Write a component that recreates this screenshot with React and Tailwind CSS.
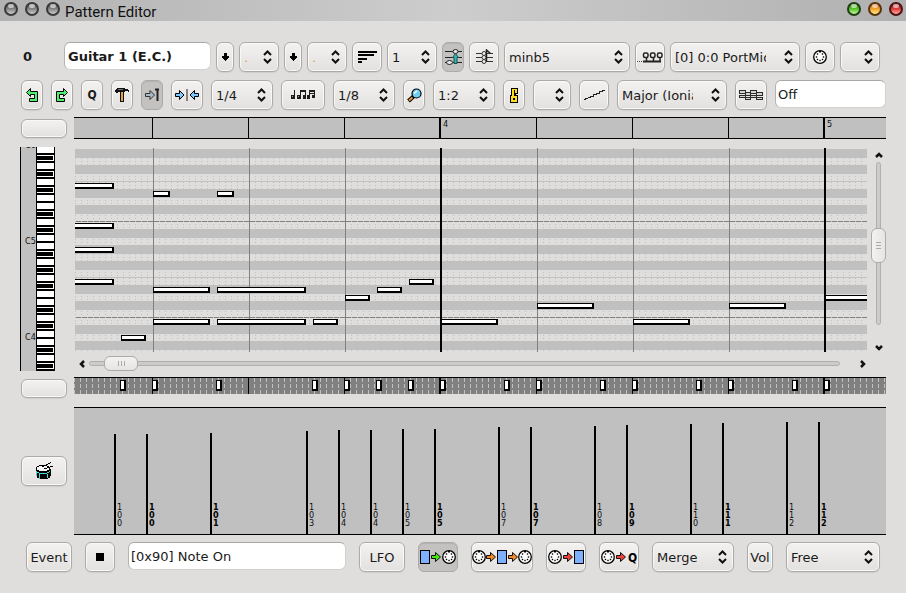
import React from "react";

/* ---------- data ---------- */

// Notes of the pattern: start and length in pixels, row counted from the top.
const NOTES = [
  { x: 0, w: 39, row: 4, open: true },
  { x: 0, w: 39, row: 9, open: true },
  { x: 0, w: 39, row: 12, open: true },
  { x: 0, w: 39, row: 16, open: true },
  { x: 78, w: 17, row: 5 },
  { x: 142, w: 17, row: 5 },
  { x: 78, w: 57, row: 17 },
  { x: 142, w: 89, row: 17 },
  { x: 78, w: 57, row: 21 },
  { x: 142, w: 89, row: 21 },
  { x: 238, w: 25, row: 21 },
  { x: 46, w: 25, row: 23 },
  { x: 270, w: 25, row: 18 },
  { x: 302, w: 25, row: 17 },
  { x: 334, w: 25, row: 16 },
  { x: 366, w: 57, row: 21 },
  { x: 462, w: 57, row: 19 },
  { x: 558, w: 57, row: 21 },
  { x: 654, w: 57, row: 19 },
  { x: 750, w: 57, row: 18 },
];

const SHADED_ROWS = [0, 2, 5, 7, 10, 12, 14, 17, 19, 22, 24];
const BLACK_KEYS = [9, 25, 41, 65, 81, 105, 121, 137, 161, 177, 201, 217];
const KEY_EDGES = Array.from({ length: 28 }, (_, i) => 6 + i * 8);

const BEATS = [78, 174, 270, 462, 558, 654];
const BARS = [
  { x: 366, name: "4" },
  { x: 750, name: "5" },
];

const EVENTS = [
  { x: 40, v: 100, bold: false },
  { x: 72, v: 100, bold: true },
  { x: 136, v: 101, bold: true },
  { x: 232, v: 103, bold: false },
  { x: 264, v: 104, bold: false },
  { x: 296, v: 104, bold: false },
  { x: 328, v: 105, bold: false },
  { x: 360, v: 105, bold: true },
  { x: 424, v: 107, bold: false },
  { x: 456, v: 107, bold: true },
  { x: 520, v: 108, bold: false },
  { x: 552, v: 109, bold: true },
  { x: 616, v: 110, bold: false },
  { x: 648, v: 111, bold: true },
  { x: 712, v: 112, bold: false },
  { x: 744, v: 112, bold: true },
];

/* ---------- controls ---------- */

const FACE =
  "flex h-[30px] shrink-0 items-center justify-center overflow-hidden rounded-md border border-[#adaba8] text-[13px] text-[#1a1a1a]";
const RAISED =
  "bg-gradient-to-b from-[#f3f2f1] to-[#e2e1df] shadow-[inset_0_0_0_1px_#f8f8f7,0_1px_1px_#cfcecc]";
const PRESSED = "bg-[#c3c2c1] shadow-[inset_0_1px_1px_#b4b3b1]";

function Button({ label, width, active, children }) {
  const isText = typeof children === "string";
  return (
    <button
      type="button"
      aria-label={label}
      aria-pressed={active}
      className={`${FACE} ${active ? PRESSED : RAISED} ${width} ${isText ? "pt-[2px]" : ""}`}
    >
      {children}
    </button>
  );
}

function Combo({ label, width, value, tone = "text-[#1a1a1a]", pad = "pr-[33px]" }) {
  return (
    <div className={`relative shrink-0 ${width}`}>
      <select
        aria-label={label}
        defaultValue={value}
        className={`block h-[30px] w-full appearance-none overflow-hidden rounded-md border border-[#adaba8] pt-[2px] pl-1 text-[13px] ${RAISED} ${pad} ${tone}`}
      >
        <option value={value}>{value}</option>
      </select>
      <svg
        className="pointer-events-none absolute top-2 right-[7px]"
        width="9"
        height="14"
        fill="none"
        stroke="#111"
        strokeWidth="2"
      >
        <path d="M1 5 L4.500 1.500 L8 5 M1 9 L4.500 12.500 L8 9" />
      </svg>
    </div>
  );
}

const FIELD =
  "h-7 min-w-0 flex-1 rounded-md border border-[#d2d1cf] border-t-[#a9a8a6] border-l-[#b5b4b2] bg-white text-[13px] text-[#1a1a1a]";

function TextBox({ label, value }) {
  return <input type="text" aria-label={label} defaultValue={value} className={`${FIELD} px-[2px]`} />;
}

function SideButton({ label, height, children }) {
  return (
    <button
      type="button"
      aria-label={label}
      className={`ml-px flex w-[46px] items-center justify-center rounded-md border border-[#adaba8] ${RAISED} ${height}`}
    >
      {children}
    </button>
  );
}

/* ---------- icons ---------- */

function Icon({ w, h, smooth, children }) {
  return (
    <svg
      width={w}
      height={h}
      viewBox={`0 0 ${w} ${h}`}
      shapeRendering={smooth ? "auto" : "crispEdges"}
      className="shrink-0"
      aria-hidden="true"
    >
      {children}
    </svg>
  );
}

const DownArrow = () => (
  <Icon w={7} h={8}>
    <path d="M2 0h3v3h2v2h-1v1h-1v1h-1v1h-1v-1h-1v-1h-1v-1h-1v-2h2z" fill="#000" />
  </Icon>
);

const UndoIcon = () => (
  <Icon w={12} h={14} smooth>
    <path d="M.5 4.500L4.500.5V3.500H11.500V13.500H3.500V10.500H8.500V6.500H4.500V8.500Z" fill="#4df06c" stroke="#000" />
  </Icon>
);

const RedoIcon = () => (
  <Icon w={12} h={14} smooth>
    <path d="M11.500 4.500L7.500.5V3.500H.5V13.500H8.500V10.500H3.500V6.500H7.500V8.500Z" fill="#4df06c" stroke="#000" />
  </Icon>
);

const HammerIcon = () => (
  <Icon w={14} h={14}>
    <path d="M2 0h8v1h3v1h1v2h-1v-1h-3v1h-7v1h-2v-1h-1v-2h1v-1h1z" fill="#111" />
    <path d="M3 1h5v1h-5z" fill="#777" />
    <path d="M5 4h4v10h-4z" fill="#111" />
    <path d="M6 4h2v9h-2z" fill="#e3a33c" />
  </Icon>
);

const StepIcon = () => (
  <Icon w={15} h={14} smooth>
    <path d="M.5 5.500H5V2.500L9.500 7L5 11.500V8.500H.5Z" fill="#a9bac6" stroke="#333" />
    <path d="M10 1.500H14M12.500 1V13" stroke="#222" strokeWidth="2" fill="none" />
  </Icon>
);

const SnapInIcon = () => (
  <Icon w={24} h={12} smooth>
    <path d="M.5 4.500H4.500V1.500L9 6L4.500 10.500V7.500H.5Z" fill="#7cc8ff" stroke="#000" />
    <path d="M23.500 4.500H19.500V1.500L15 6L19.500 10.500V7.500H23.500Z" fill="#7cc8ff" stroke="#000" />
    <path d="M11.500 0h1v12h-1z" fill="#222" />
  </Icon>
);

const NotesIcon = () => (
  <Icon w={25} h={10}>
    <path
      d="M3 0h1v9h-1zM0 5h4v4h-4zM9 0h1v9h-1zM6 5h4v4h-4zM9 0h6v2h-6zM14 0h1v9h-1zM12 5h3v4h-3zM18 0h1v9h-1zM16 5h3v4h-3zM18 0h6v2h-6zM18 3h6v1h-6zM23 0h1v8h-1zM21 5h3v3h-3z"
      fill="#1c1c1c"
    />
    <path d="M1 6h1v1h-1zM7 6h1v1h-1z" fill="#999" />
  </Icon>
);

const ZoomIcon = () => (
  <Icon w={15} h={15} smooth>
    <path d="M6.500 8.500L1.500 13" stroke="#000" strokeWidth="4" />
    <path d="M5.500 9.500L2 12.500" stroke="#e8973a" strokeWidth="2" />
    <circle cx="9.500" cy="5.500" r="4.500" fill="#6fcdf5" stroke="#000" strokeWidth="1.200" />
    <path d="M7 5.500L10 3" stroke="#fff" strokeWidth="1.500" />
  </Icon>
);

const KeyIcon = () => (
  <Icon w={8} h={15}>
    <path d="M1 0h7v6h-2v1h2v8h-8v-8h1z" fill="#000" />
    <path d="M2 1h2v7h-2zM4 1h3v1h-3zM5 2h2v3h-2zM1 8h6v6h-6z" fill="#fbdc1e" />
    <path d="M3 10h2v2h-2z" fill="#000" />
  </Icon>
);

const StairIcon = () => (
  <Icon w={22} h={12}>
    <path d="M0 10h2v-1h3v-1h2v-1h3v-2h3v-1h3v-2h3v-1h3v1h-2v1h-3v2h-3v1h-3v2h-3v1h-3v1h-2v1h-2z" fill="#222" />
  </Icon>
);

const WeaveIcon = () => (
  <Icon w={24} h={12}>
    <g fill="#d4d4d4" stroke="#2c2c2c">
      <rect x=".5" y="1.500" width="6" height="3" />
      <rect x=".5" y="6.500" width="6" height="2" />
      <rect x="6.500" y="3.500" width="5" height="3" />
      <rect x="6.500" y="8.500" width="5" height="2" />
      <rect x="11.500" y="1.500" width="6" height="3" />
      <rect x="11.500" y="6.500" width="6" height="2" />
      <rect x="17.500" y="3.500" width="6" height="3" />
      <rect x="17.500" y="8.500" width="6" height="2" />
    </g>
  </Icon>
);

const LinesIcon = () => (
  <Icon w={19} h={12}>
    <path d="M0 0h19v2h-19zM0 3h16v2h-16zM0 7h9v2h-9zM0 10h4v2h-4z" fill="#000" />
  </Icon>
);

const TransposeIcon = () => (
  <Icon w={17} h={16} smooth>
    <path d="M0 2.500H17M0 8.500H17M0 13.500H17" stroke="#222" />
    <ellipse cx="10.500" cy="2.500" rx="2.500" ry="2" fill="#e6e6e6" stroke="#222" />
    <ellipse cx="4.500" cy="13.500" rx="3" ry="2" fill="#e6e6e6" stroke="#222" />
    <path d="M10.500 4.500L13.500 8.500H12V14.500H9V8.500H7.500Z" fill="#2fb5b0" stroke="#1d4f4d" />
  </Icon>
);

const ChordIcon = () => (
  <Icon w={17} h={16} smooth>
    <path d="M0 4.500H17M0 8.500H17M0 12.500H17" stroke="#333" />
    <g fill="#eee" stroke="#333">
      <circle cx="8" cy="4.500" r="2" />
      <circle cx="8" cy="8.500" r="2" />
      <circle cx="8" cy="12.500" r="2" />
    </g>
    <path d="M10.500 13V1L14.500 4.500" fill="none" stroke="#222" strokeWidth="1.500" />
  </Icon>
);

const ToneIcon = () => (
  <Icon w={26} h={11} smooth>
    <g fill="#eee" stroke="#222" strokeWidth="1.500">
      <rect x="6.500" y="1" width="4.500" height="4.500" rx="1.500" />
      <rect x="13.500" y="1" width="4.500" height="4.500" rx="1.500" />
      <rect x="20.500" y="1" width="4.500" height="4.500" rx="1.500" />
    </g>
    <path d="M9.500 5V9M16.500 5V9M23 5V9" stroke="#222" strokeWidth="1.500" />
    <path d="M6 9.500H24" stroke="#222" strokeWidth="2" />
    <path d="M0 9.500H6" stroke="#444" strokeDasharray="1 1" />
  </Icon>
);

const PINS = [
  [3.5, 7],
  [4.5, 4],
  [9.5, 4],
  [10.5, 7],
  [4.5, 9.5],
  [7, 10.5],
  [9.5, 9.5],
];

function Din({ x }) {
  return (
    <g transform={`translate(${x - 7} 0)`}>
      <circle cx="7" cy="7" r="6.300" fill="#fff" stroke="#000" strokeWidth="1.300" />
      <path d="M6 1h2v1.500h-2z" fill="#000" />
      {PINS.map(([px, py]) => (
        <rect key={`${px}-${py}`} x={px - 0.7} y={py - 0.7} width="1.400" height="1.400" fill="#000" />
      ))}
    </g>
  );
}

function Arrow({ x, fill }) {
  return <path transform={`translate(${x} 0)`} d="M.5 5.500H4.500V2.500L9.500 7L4.500 11.500V8.500H.5Z" fill={fill} stroke="#111" />;
}

function Block({ x }) {
  return <rect x={x + 0.5} y=".5" width="9" height="13" fill="#7fb0ff" stroke="#000" />;
}

const DinIcon = () => (
  <Icon w={14} h={14} smooth>
    <Din x={7} />
  </Icon>
);

const BlockToDin = () => (
  <Icon w={36} h={14} smooth>
    <Block x={0} />
    <Arrow x={11} fill="#46e613" />
    <Din x={29} />
  </Icon>
);

const DinThruDin = () => (
  <Icon w={60} h={14} smooth>
    <Din x={7} />
    <Arrow x={14} fill="#f08a24" />
    <Block x={25} />
    <Arrow x={36} fill="#f08a24" />
    <Din x={53} />
  </Icon>
);

const DinToBlock = () => (
  <Icon w={36} h={14} smooth>
    <Din x={7} />
    <Arrow x={15} fill="#f0403a" />
    <Block x={26} />
  </Icon>
);

const DinToQ = () => (
  <Icon w={36} h={14} smooth>
    <Din x={7} />
    <Arrow x={15} fill="#f0403a" />
    <text x="27" y="12" fontSize="12" fontWeight="bold" className="font-['DejaVu_Sans_Condensed']">
      Q
    </text>
  </Icon>
);

const DrumIcon = () => (
  <Icon w={18} h={18}>
    <path d="M1 7h15v7h-1v2h-2v1h-9v-1h-2v-2h-1z" fill="#000" />
    <path d="M4 3h8v1h2v1h1v3h-1v1h-2v1h-8v-1h-2v-1h-1v-3h1v-1h2z" fill="#000" />
    <path d="M4 4h8v1h2v3h-2v1h-8v-1h-2v-3h2z" fill="#f4f4f4" />
    <path d="M1 9h1v1h2v1h8v-1h2v-1h1v1h-1v1h-2v1h-8v-1h-2v-1h-1zM4 12h1v5h-1zM12 12h1v4h-1zM1 10h1v4h-1z" fill="#45d9dc" />
    <path d="M15 0h1v1h-1v1h-2v1h-2v1h-2v1h-2v-1h2v-1h2v-1h2v-1h2zM18 4h-3v1h-3v1h-3v1h3v-1h3v-1h3z" fill="#000" />
  </Icon>
);

/* ---------- title bar ---------- */

const LIGHTS = {
  grey: "from-[#4a4a4a] via-[#868686] to-[#d0d0d0] border-[#3a3a3a]",
  green: "from-[#2e7d12] via-[#58c62b] to-[#c2f79a] border-[#1f3f12]",
  amber: "from-[#b8560f] via-[#f0a22c] to-[#fff08a] border-[#5a3210]",
  red: "from-[#8e1414] via-[#dd3b3b] to-[#ffaaa2] border-[#4d1212]",
};

function Light({ label, tone }) {
  return (
    <button
      type="button"
      aria-label={label}
      className={`flex size-[14px] justify-center rounded-full border-2 bg-gradient-to-b ${LIGHTS[tone]}`}
    >
      <span className="h-1 w-[6px] rounded-full bg-white/60" />
    </button>
  );
}

function TitleBar() {
  return (
    <header className="flex h-[21px] items-start justify-between bg-gradient-to-r from-[#b2b2b2] via-[#cdcdcd] to-[#b0b0b0] px-1 pt-[2px]">
      <div className="flex gap-[7px]">
        <Light label="Menu" tone="grey" />
        <Light label="Shade" tone="grey" />
        <Light label="Stick" tone="grey" />
        <h1 className="-ml-[2px] font-[Roboto,sans-serif] text-[15px] leading-5 text-[#111]">Pattern Editor</h1>
      </div>
      <div className="-mr-px flex gap-[7px]">
        <Light label="Minimise" tone="green" />
        <Light label="Maximise" tone="amber" />
        <Light label="Close" tone="red" />
      </div>
    </header>
  );
}

/* ---------- editor panes ---------- */

function Timeline() {
  return (
    <svg className="h-[22px] min-w-0 flex-1" shapeRendering="crispEdges">
      <rect width="100%" height="22" fill="#c0c0c0" />
      <rect width="100%" height="1" fill="#000" />
      <rect y="21" width="100%" height="1" fill="#000" />
      {BEATS.map((x) => (
        <rect key={x} x={x} width="1" height="22" fill="#000" />
      ))}
      {BARS.map((bar) => (
        <g key={bar.name}>
          <rect x={bar.x - 1} width="2" height="22" fill="#000" />
          <text x={bar.x + 3} y="10" fontSize="9" fill="#111" className="font-['DejaVu_Sans_Condensed']">
            {bar.name}
          </text>
        </g>
      ))}
    </svg>
  );
}

function Keyboard() {
  return (
    <svg width="35" height="224" className="shrink-0" shapeRendering="crispEdges">
      <rect width="35" height="224" fill="#000" />
      <rect x="1" width="15" height="224" fill="#c0c0c0" />
      <rect x="17" width="17" height="224" fill="#fff" />
      {KEY_EDGES.map((y) => (
        <rect key={y} x="17" y={y} width="17" height="2" fill="#000" />
      ))}
      {BLACK_KEYS.map((y) => (
        <rect key={y} x="17" y={y} width="16" height="4" fill="#000" />
      ))}
      <g fontSize="9" fill="#111" className="font-['DejaVu_Sans_Condensed']">
        <text x="5" y="1">C6</text>
        <text x="5" y="97">C5</text>
        <text x="5" y="193">C4</text>
      </g>
    </svg>
  );
}

function Roll() {
  return (
    <svg className="block h-[204px] w-full" shapeRendering="crispEdges">
      <defs>
        <pattern id="dots" width="6" height="3" patternUnits="userSpaceOnUse" y="1">
          <rect width="1" height="1" fill="#c0c0c0" />
        </pattern>
      </defs>
      <rect y="10" width="100%" height="194" fill="url(#dots)" />
      {SHADED_ROWS.map((row) => (
        <rect key={row} y={row * 8 + 1} width="100%" height="9" fill="#c0c0c0" />
      ))}
      {[33, 129].map((y) => (
        <rect key={y} y={y} width="100%" height="1" fill="#c0c0c0" />
      ))}
      {[73, 169].map((y) => (
        <line key={y} x1="1" x2="100%" y1={y + 0.5} y2={y + 0.5} stroke="#808080" strokeDasharray="5 1" />
      ))}
      {BEATS.map((x) => (
        <rect key={x} x={x} width="1" height="204" fill="#808080" />
      ))}
      {BARS.map((bar) => (
        <rect key={bar.name} x={bar.x - 1} width="2" height="204" fill="#000" />
      ))}
      {NOTES.map((n) => (
        <g key={`${n.x}-${n.row}`}>
          <rect x={n.x} y={n.row * 8 + 3} width={n.w} height="6" fill="#000" />
          <rect
            x={n.open ? n.x : n.x + 1}
            y={n.row * 8 + 4}
            width={n.open ? n.w - 2 : n.w - 3}
            height="3"
            fill="#fff"
          />
        </g>
      ))}
    </svg>
  );
}

function EventStrip() {
  return (
    <svg className="h-[17px] min-w-0 flex-1" shapeRendering="crispEdges">
      <defs>
        <pattern id="ticks" width="6" height="6" y="1" patternUnits="userSpaceOnUse">
          <rect width="1" height="4" fill="#c0c0c0" />
        </pattern>
      </defs>
      <rect width="100%" height="17" fill="#808080" />
      <rect width="100%" height="17" fill="url(#ticks)" />
      <rect width="100%" height="1" fill="#000" />
      {BEATS.map((x) => (
        <rect key={x} x={x} width="1" height="17" fill="#000" />
      ))}
      {BARS.map((bar) => (
        <rect key={bar.name} x={bar.x - 1} width="2" height="17" fill="#000" />
      ))}
      {EVENTS.map((e) => (
        <g key={e.x}>
          <rect x={e.x + 6} y="3" width="6" height="11" fill="#000" />
          <rect x={e.x + 7} y="4" width="3" height="8" fill="#fff" />
        </g>
      ))}
    </svg>
  );
}

function VelocityPane() {
  return (
    <svg className="h-32 min-w-0 flex-1" shapeRendering="crispEdges">
      <rect width="100%" height="128" fill="#c0c0c0" />
      <rect width="100%" height="1" fill="#000" />
      <rect y="127" width="100%" height="1" fill="#000" />
      {EVENTS.map((e) => (
        <g key={e.x}>
          <rect x={e.x} y={127 - e.v} width="2" height={e.v} fill="#000" />
          <text
            fontSize="9"
            fontWeight={e.bold ? "bold" : "normal"}
            fill={e.bold ? "#000" : "#111"}
            className="font-['DejaVu_Sans_Condensed']"
          >
            {String(e.v).split("").map((digit, i) => (
              <tspan key={i} x={e.x + 3} y={103 + i * 8}>
                {digit}
              </tspan>
            ))}
          </text>
        </g>
      ))}
    </svg>
  );
}

/* ---------- scroll bars ---------- */

const TRACK = "relative rounded-full border border-[#b0afad] bg-[#cccbca]";

function HorizontalScroll() {
  return (
    <div className="flex h-[15px] items-center">
      <button type="button" aria-label="Scroll left" className="flex w-[14px] justify-center">
        <svg width="6" height="8" fill="none" stroke="#111" strokeWidth="2.500">
          <path d="M5 1L2 4L5 7" />
        </svg>
      </button>
      <div role="scrollbar" aria-orientation="horizontal" aria-controls="roll" aria-valuenow={2} className={`h-[5px] flex-1 ${TRACK}`}>
        <div className="absolute -top-[6px] left-[14px] flex h-[15px] w-[34px] items-center justify-center gap-[2px] rounded-md border border-[#adaba8] bg-gradient-to-b from-[#f3f2f1] to-[#e6e5e3]">
          <span className="h-[5px] w-px bg-[#aaa]" />
          <span className="h-[5px] w-px bg-[#aaa]" />
          <span className="h-[5px] w-px bg-[#aaa]" />
        </div>
      </div>
      <button type="button" aria-label="Scroll right" className="ml-[18px] flex w-[9px] justify-center">
        <svg width="6" height="8" fill="none" stroke="#111" strokeWidth="2.500">
          <path d="M1 1L4 4L1 7" />
        </svg>
      </button>
    </div>
  );
}

function VerticalScroll() {
  return (
    <div className="flex h-[204px] w-[15px] shrink-0 flex-col items-center">
      <button type="button" aria-label="Scroll up" className="flex h-[14px] items-center">
        <svg width="8" height="6" fill="none" stroke="#111" strokeWidth="2.500">
          <path d="M1 5L4 2L7 5" />
        </svg>
      </button>
      <div role="scrollbar" aria-orientation="vertical" aria-controls="roll" aria-valuenow={50} className={`w-[5px] flex-1 ${TRACK}`}>
        <div className="absolute top-[65px] -left-[6px] flex h-[35px] w-[15px] flex-col items-center justify-center gap-[2px] rounded-md border border-[#adaba8] bg-gradient-to-r from-[#f3f2f1] to-[#e6e5e3]">
          <span className="h-px w-[5px] bg-[#aaa]" />
          <span className="h-px w-[5px] bg-[#aaa]" />
          <span className="h-px w-[5px] bg-[#aaa]" />
        </div>
      </div>
      <button type="button" aria-label="Scroll down" className="mt-[18px] flex h-[9px] items-center">
        <svg width="8" height="6" fill="none" stroke="#111" strokeWidth="2.500">
          <path d="M1 1L4 4L7 1" />
        </svg>
      </button>
    </div>
  );
}

/* ---------- tool bars ---------- */

function SequenceBar() {
  return (
    <div className="flex gap-[5px] pt-[21px] pr-[26px] pl-[23px]">
      <label htmlFor="sequence-name" className="w-9 text-[13px] leading-[30px] font-bold text-[#1a1a1a]">
        0
      </label>
      <input
        id="sequence-name"
        type="text"
        defaultValue="Guitar 1 (E.C.)"
        className={`${FIELD} px-[3px] font-bold`}
      />
      <Button label="Lower numerator" width="w-[18px]"><DownArrow /></Button>
      <Combo label="Numerator" width="w-10" value="." tone="text-[#e6a04e]" pad="pr-5" />
      <Button label="Lower denominator" width="w-[18px]"><DownArrow /></Button>
      <Combo label="Denominator" width="w-10" value="." tone="text-[#e6a04e]" pad="pr-5" />
      <Button label="Length" width="w-[30px]"><LinesIcon /></Button>
      <Combo label="Measures" width="w-[50px]" value="1" pad="pr-5" />
      <Button label="Transposable" width="w-[22px]" active><TransposeIcon /></Button>
      <Button label="Chord" width="w-[30px]"><ChordIcon /></Button>
      <Combo label="Chord type" width="w-[126px]" value="minb5" />
      <Button label="Instrument map" width="w-[30px]"><ToneIcon /></Button>
      <Combo label="MIDI bus" width="w-[130px]" value="[0] 0:0 PortMidi" />
      <Button label="MIDI channel" width="w-[30px]"><DinIcon /></Button>
      <Combo label="Channel" width="w-10" value="" pad="pr-5" />
    </div>
  );
}

function EditBar() {
  return (
    <div className="mt-2 flex gap-2 pr-5 pl-[21px]">
      <Button label="Undo" width="w-[22px]"><UndoIcon /></Button>
      <Button label="Redo" width="w-[22px]"><RedoIcon /></Button>
      <Button width="w-[22px]">
        <span className="font-['DejaVu_Sans_Condensed'] text-[12px] font-bold">Q</span>
      </Button>
      <Button label="Tools" width="w-[22px]"><HammerIcon /></Button>
      <Button label="Follow progress" width="w-[22px]" active><StepIcon /></Button>
      <Button label="Snap" width="w-8"><SnapInIcon /></Button>
      <Combo label="Grid snap" width="w-[62px]" value="1/4" pad="pr-5" />
      <Button label="Note length" width="w-11"><NotesIcon /></Button>
      <Combo label="Note length value" width="w-[62px]" value="1/8" pad="pr-5" />
      <Button label="Zoom" width="w-[22px]"><ZoomIcon /></Button>
      <Combo label="Zoom level" width="w-[62px]" value="1:2" pad="pr-5" />
      <Button label="Key" width="w-[22px]"><KeyIcon /></Button>
      <Combo label="Key of sequence" width="w-[38px]" value="" pad="pr-5" />
      <Button label="Scale" width="w-[30px]"><StairIcon /></Button>
      <Combo label="Musical scale" width="w-[110px]" value="Major (Ionian)" />
      <Button label="Background sequence" width="w-8"><WeaveIcon /></Button>
      <TextBox label="Background" value="Off" />
    </div>
  );
}

function EventBar() {
  return (
    <div className="mt-[7px] flex gap-[13px] pr-[26px] pl-[26px]">
      <Button width="w-[46px]">Event</Button>
      <Button label="Stop" width="w-[30px]">
        <span className="size-2 bg-black" />
      </Button>
      <TextBox label="Event type" value="[0x90] Note On" />
      <Button width="w-[46px]">LFO</Button>
      <Button label="Play to MIDI" width="w-10" active><BlockToDin /></Button>
      <Button label="Pass MIDI through" width="w-[62px]"><DinThruDin /></Button>
      <Button label="Record MIDI" width="w-10"><DinToBlock /></Button>
      <Button label="Quantised record" width="w-10"><DinToQ /></Button>
      <Combo label="Record mode" width="w-[82px]" value="Merge" pad="pr-5" />
      <Button width="w-[26px]">Vol</Button>
      <Combo label="Record volume" width="w-[94px]" value="Free" />
    </div>
  );
}

export default function App() {
  return (
    <div className="min-h-screen bg-[#dfdedd] font-['DejaVu_Sans','Bitstream_Vera_Sans',sans-serif]">
      <TitleBar />
      <main>
        <SequenceBar />
        <EditBar />

        <div className="pr-5 pl-5">
          <div className="mt-[7px] flex">
            <div className="w-[54px] shrink-0 pt-[2px]">
              <SideButton label="Loop range" height="h-[19px]" />
            </div>
            <Timeline />
          </div>

          <div className="mt-2 flex">
            <div className="w-[55px] shrink-0">
              <Keyboard />
            </div>
            <div className="flex min-w-0 flex-1 gap-1 pt-px">
              <div id="roll" className="flex min-w-0 flex-1 flex-col gap-1">
                <Roll />
                <HorizontalScroll />
              </div>
              <VerticalScroll />
            </div>
          </div>

          <div className="mt-[6px] flex items-start">
            <div className="w-[54px] shrink-0 pt-[2px]">
              <SideButton label="Event options" height="h-[19px]" />
            </div>
            <EventStrip />
          </div>

          <div className="mt-[9px] flex items-center">
            <div className="w-[54px] shrink-0">
              <SideButton label="Drum data" height="h-[30px]">
                <DrumIcon />
              </SideButton>
            </div>
            <VelocityPane />
          </div>
        </div>

        <EventBar />
      </main>
    </div>
  );
}
